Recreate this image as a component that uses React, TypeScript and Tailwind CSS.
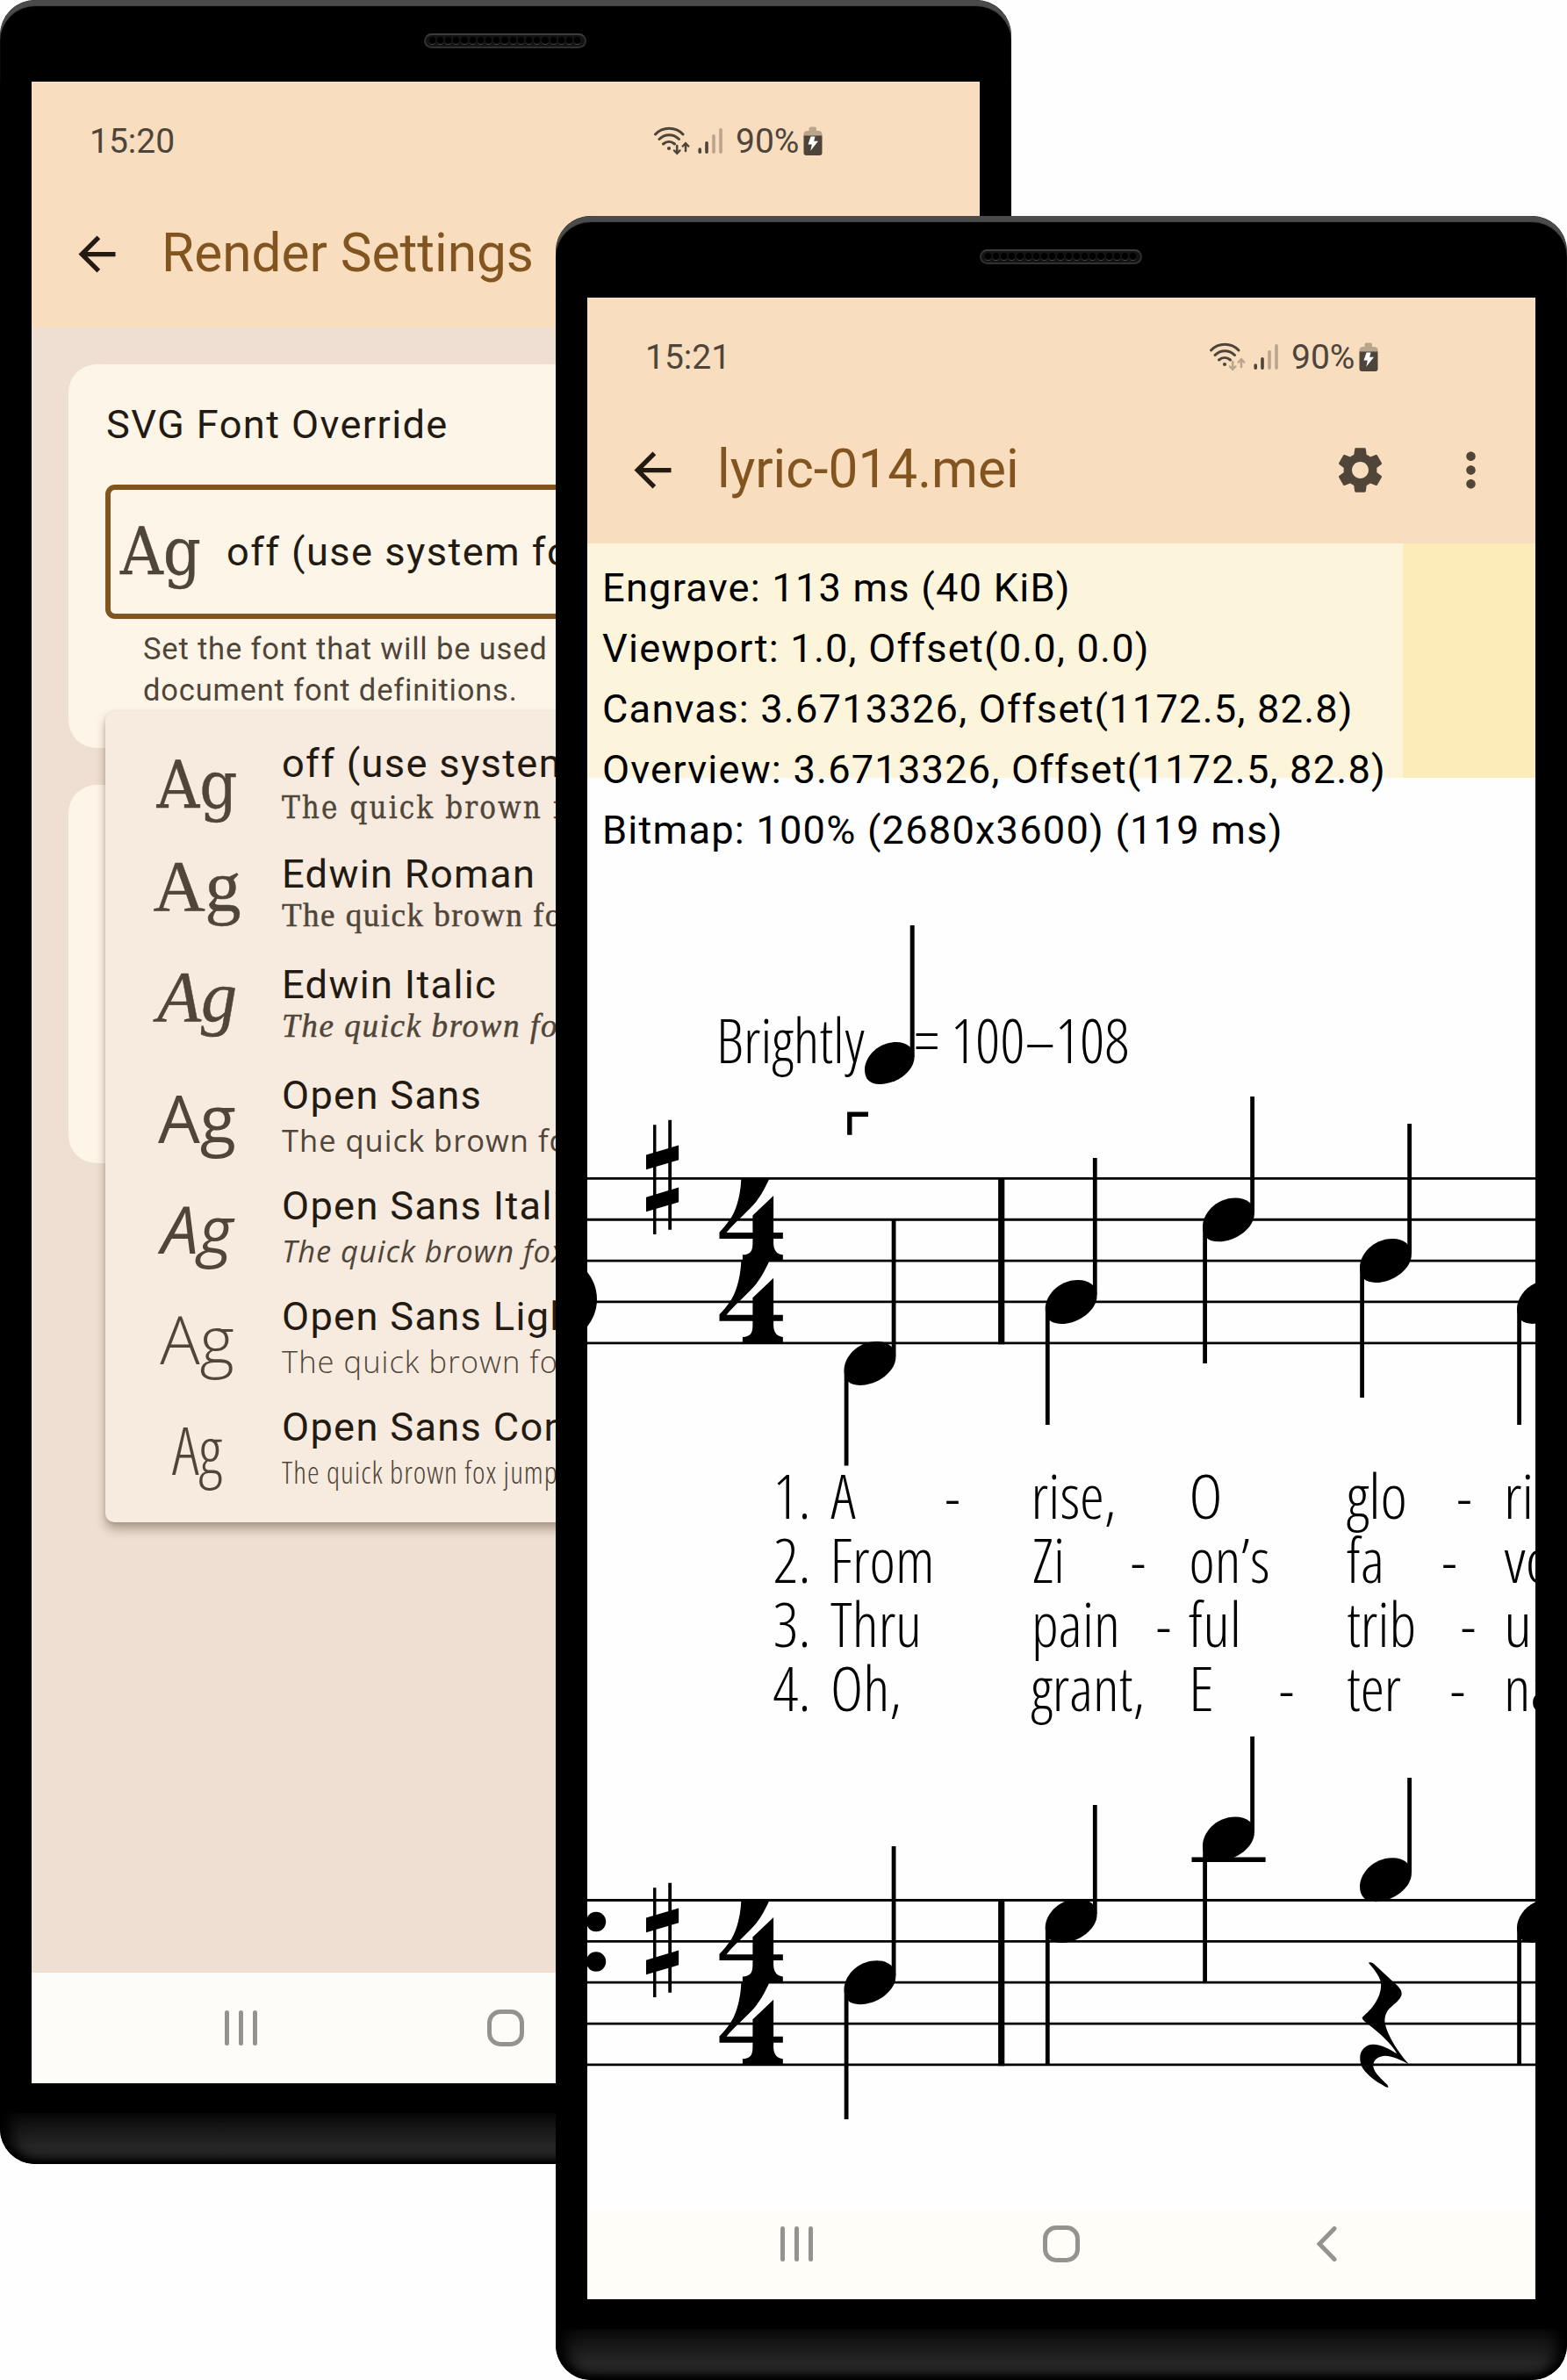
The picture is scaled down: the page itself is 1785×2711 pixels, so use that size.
import type { ReactNode } from "react";
import { MdArrowBack, MdMoreVert, MdSettings } from "react-icons/md";

const SERIF = "font-['DejaVu_Serif_Condensed','DejaVu_Serif',serif] [font-stretch:75%] [-webkit-text-stroke:0.4px_#4f4539]";
const EDWIN = "font-['Liberation_Serif',serif] [-webkit-text-stroke:0.5px_#4f4539]";
const OPEN = "font-['Open_Sans',sans-serif]";

function Speaker() {
  return (
    <div className="mr-[2px] flex h-[17px] w-[185px] items-center justify-center gap-[2px] rounded-full border-2 border-[#303030] border-t-[#3c3c3c] bg-[#131313]">
      {Array.from({ length: 19 }, (_, i) => (
        <span key={i} className="h-[9px] w-[7.2px] shrink-0 rounded-full border-b-[1.5px] border-[#4a4a4a] bg-black" />
      ))}
    </div>
  );
}

function StatusIcons({ arrows }: { arrows: string }) {
  return (
    <svg width="84" height="36" viewBox="743 143 84 36" fill="none" stroke="#4d443a" strokeLinecap="round" className="shrink-0">
      <g strokeWidth="3">
        <path d="M746.5 153C755 144 769.500 144 778 153" />
        <path d="M751 158.500C757.500 152 767 152 773.500 158.500" />
        <path d="M755.500 164C759.500 160.500 764.500 160.500 768.500 164" />
      </g>
      <circle cx="762" cy="169" r="2.100" fill="#4d443a" stroke="none" />
      <g stroke={arrows} strokeWidth="2.500">
        <path d="M771.200 166V174.500M768 171.500L771.200 174.800L774.400 171.500" />
        <path d="M781 172V163.500M777.800 166.500L781 163.200L784.200 166.500" />
      </g>
      <g strokeWidth="3.600">
        <path d="M797.200 170V173.300M805 162.800V173.300" />
        <path d="M813 154.800V173.300M821 147.800V173.300" stroke="#baa58d" />
      </g>
    </svg>
  );
}

function Battery() {
  return (
    <svg width="22" height="34" viewBox="0 0 22 34" className="ml-[5px] shrink-0">
      <path d="M6.500 5V2.500Q6.500 .5 8.500 .5H13Q15 .5 15 2.500V5H18Q21.500 5.500 21.500 9V11H.5V9Q.5 5.500 4 5Z" fill="#baa58d" />
      <path d="M.5 10.500H21.500V30Q21.500 33 18.500 33H3.500Q.5 33 .5 30Z" fill="#4d443a" />
      <path d="M8.500 11.500H13.500L12.200 16.800H17L8.300 27.800L9.800 20.500H5.500Z" fill="#fff" />
    </svg>
  );
}

function Header({ time, title, arrows, children }: { time: string; title: string; arrows: string; children?: ReactNode }) {
  return (
    <header className="h-[280px] bg-[#f8ddbf]">
      <div className="flex h-[135px] items-center pl-[66px] text-[39px] text-[#4d443a]">
        <span className="w-[641px] pt-[2px]">{time}</span>
        <StatusIcons arrows={arrows} />
        <span className="ml-[11px] pt-[2px]">90%</span>
        <Battery />
      </div>
      <div className="flex h-[123px] items-center pl-[43px]">
        <MdArrowBack size={63} color="#231a12" className="shrink-0" />
        <h1 className="ml-[42px] text-[60.3px] leading-none text-[#82541f]">{title}</h1>
        {children}
      </div>
    </header>
  );
}

function NavBar({ className }: { className: string }) {
  return (
    <nav className={`flex shrink-0 justify-center ${className}`}>
      <div className="flex w-[302px] items-center justify-center gap-[11px]">
        <i className="h-[40px] w-[5px] rounded-full bg-[#949390]" />
        <i className="h-[40px] w-[5px] rounded-full bg-[#949390]" />
        <i className="h-[40px] w-[5px] rounded-full bg-[#949390]" />
      </div>
      <div className="flex w-[302px] items-center justify-center">
        <i className="size-[42px] rounded-[15px] border-[5.5px] border-[#949390]" />
      </div>
      <div className="flex w-[302px] items-center justify-center">
        <svg width="24" height="42" viewBox="0 0 24 42" fill="none" stroke="#949390" strokeWidth="5" strokeLinecap="round">
          <path d="M21 3.500L4 21L21 38.500" />
        </svg>
      </div>
    </nav>
  );
}

function Phone({ className, children }: { className?: string; children: ReactNode }) {
  return (
    <div className={`isolate col-start-1 row-start-1 flex h-[2465px] w-[1152px] flex-col overflow-hidden rounded-[40px] bg-black ${className ?? ""}`}>
      <div className="flex h-[93px] shrink-0 justify-center rounded-t-[40px] pt-[38px] shadow-[inset_0_7px_1px_#4b4b4b]">
        <Speaker />
      </div>
      <div className="relative mx-[36px] flex h-[2280px] shrink-0 flex-col overflow-hidden">{children}</div>
      <div className="mt-[34px] h-[58px] rounded-b-[40px] bg-linear-to-b from-[#0a0a0a] via-[#262626] via-65% to-[#1c1c1c] shadow-[inset_20px_0_16px_-8px_#000,inset_-20px_0_16px_-8px_#000,inset_0_-6px_6px_-1px_#000]" />
    </div>
  );
}

const fonts = [
  { name: "off (use system font)", ag: `${SERIF} text-[75px] leading-[126px]`, sub: `${SERIF} text-[34.500px] tracking-[2.150px]` },
  { name: "Edwin Roman", ag: `${EDWIN} text-[82px] leading-[106px]`, sub: `${EDWIN} -mt-1 text-[37px] tracking-[1.500px]` },
  { name: "Edwin Italic", ag: `${EDWIN} text-[82px] leading-[106px] italic`, sub: `${EDWIN} -mt-1 text-[37px] italic tracking-[1.650px]` },
  { name: "Open Sans", ag: `${OPEN} text-[75.600px] leading-[127px]`, sub: `${OPEN} text-[34.500px] tracking-[1.000px]` },
  { name: "Open Sans Italic", ag: `${OPEN} text-[75.600px] leading-[127px] italic`, sub: `${OPEN} text-[34.500px] italic tracking-[0.950px]` },
  { name: "Open Sans Light", ag: `${OPEN} text-[75.600px] leading-[127px] font-light`, sub: `${OPEN} text-[34.500px] font-light tracking-[1.050px]` },
  { name: "Open Sans Condensed Light", ag: `${OPEN} text-[75.600px] leading-[127px] font-light [font-stretch:75%]`, sub: `${OPEN} text-[34.500px] font-light tracking-[1.000px] [font-stretch:75%]` },
];

function SettingsScreen() {
  return (
    <>
      <Header time="15:20" title="Render Settings" arrows="#4d443a" />
      <main className="relative flex flex-1 flex-col gap-[42px] bg-[#eedfd2] p-[42px]">
        <section className="h-[437px] rounded-[32px] bg-[#fef5e9] px-[42px] pt-[39px]">
          <h2 className="pl-px text-[45.200px] leading-[60px] tracking-[1.380px] text-[#231a12]">SVG Font Override</h2>
          <div className="mt-[38px] flex h-[153px] items-center rounded-[11px] border-[6px] border-[#82541f] pl-[11px]">
            <span className={`${SERIF} w-[121px] shrink-0 text-[75px] leading-none text-[#4f4539]`}>Ag</span>
            <span className="text-[45.200px] tracking-[1.430px] whitespace-nowrap text-[#231a12]">off (use system font)</span>
          </div>
          <p className="mt-[11px] pl-[43px] text-[34.500px] leading-[47px] tracking-[0.830px] whitespace-nowrap text-[#4f4539]">
            Set the font that will be used instead of
            <br />
            document font definitions.
          </p>
        </section>
        <section className="h-[431px] rounded-[32px] bg-[#fef5e9]" />
        <ul className="absolute top-[437px] left-[84px] h-[924px] w-[912px] overflow-visible rounded-[10px] bg-[#f7ebdf] py-[21px] shadow-[0_8px_12px_rgba(60,40,20,0.35),0_1px_4px_rgba(60,40,20,0.15)]">
          {fonts.map((f) => (
            <li key={f.name} className="flex h-[126px] overflow-hidden">
              <span className={`w-[201px] shrink-0 pl-[8px] text-center text-[#4f4539] ${f.ag}`}>Ag</span>
              <div className="pt-[12px] whitespace-nowrap">
                <div className="text-[45.200px] leading-[54px] tracking-[1.330px] text-[#231a12]">{f.name}</div>
                <div className={`leading-[47px]! text-[#4f4539] ${f.sub}`}>The quick brown fox jumps</div>
              </div>
            </li>
          ))}
        </ul>
      </main>
      <NavBar className="h-[126px] bg-[#fdfcf9]" />
    </>
  );
}

type Note = { x: number; y: number; up?: number; down?: number };

const notes: Note[] = [
  { x: 961.5, y: 1553, up: 1390, down: 1669.5 },
  { x: 1190.7, y: 1483, up: 1319, down: 1623 },
  { x: 1370, y: 1389.4, up: 1249, down: 1553 },
  { x: 1549, y: 1436, up: 1280, down: 1592 },
  { x: 1728, y: 1483, down: 1623 },
  { x: 961.5, y: 2258.3, up: 2103, down: 2414 },
  { x: 1190.7, y: 2188, up: 2056, down: 2352 },
  { x: 1370, y: 2094.5, up: 1978, down: 2258 },
  { x: 1549, y: 2141.2, up: 2025 },
  { x: 1728, y: 2188, down: 2352 },
];

const HEAD = "M0 -39c0 68 73 172 200 172c66 0 114 -37 114 -95c0 -84 -106 -171 -218 -171c-64 0 -96 30 -96 94z";
const FOUR =
  "M65 0C62 58 46 95 31 115C22 127 12 138 0 150V168H99V180C99 204 91 212 69 213V229H189V213C172 212 161 200 161 180V168H189V151H161V48L99 103V151H21C50 118 90 88 110 64C125 45 135 28 147 4V0Z";
const REST =
  "M982 576C988 573 995 576 1000 580L1060 625C1070 632 1080 640 1080 649C1080 660 1065 670 1050 680C1038 688 1030 698 1030 715C1034 742 1065 785 1102 817C1080 808 1055 797 1030 797C1008 798 996 808 996 822C999 838 1022 853 1038 866L1041 872C1037 873 1030 870 1025 867C1000 857 980 843 966 828C960 821 957 812 957 802C957 783 975 770 996 770C1020 770 1045 782 1066 792C1050 767 1010 740 979 721C974 717 966 714 963 707C972 697 985 692 998 676C1012 660 1019 645 1019 628C1019 612 1003 596 982 576Z";

function Sharp({ y }: { y: number }) {
  return (
    <g transform={`translate(736 ${y}) scale(.3827 .4082)`}>
      <path d="M21 -150H30V156H21ZM66 -163H76V143H66Z" />
      <path d="M0 -66L97 -93V-52L0 -25ZM0 52L97 25V66L0 93Z" />
    </g>
  );
}

// [x, advance, text] for every syllable, one array for each verse
const lyrics: [number, number, string][][] = [
  [[880.500, 43, "1."], [946.500, 28, "A"], [1076.500, 17, "-"], [1174.500, 97, "rise,"], [1354.500, 38, "O"], [1534, 69, "glo"], [1659.500, 17, "-"], [1713, 65, "rio"]],
  [[880.500, 43, "2."], [945.500, 119, "From"], [1176, 37, "Zi"], [1288, 17, "-"], [1354.500, 92, "on’s"], [1534, 43, "fa"], [1642.500, 17, "-"], [1713.500, 56, "vo"]],
  [[880.500, 43, "3."], [946, 104, "Thru"], [1175, 101, "pain"], [1317, 17, "-"], [1354, 60, "ful"], [1534, 79, "trib"], [1664, 17, "-"], [1713, 32, "u"]],
  [[880.500, 43, "4."], [946, 81, "Oh,"], [1174.500, 129.500, "grant,"], [1354, 29, "E"], [1457, 17, "-"], [1534, 62, "ter"], [1652, 17, "-"], [1713, 58, "na"]],
];

function Score() {
  return (
    <svg width="1080" height="1898" viewBox="669 619 1080 1898" className="block bg-[#fefefe]">
      <rect x="669" y="619" width="929" height="267" fill="#fdf4dc" />
      <rect x="1598" y="619" width="151" height="267" fill="#fcecb9" />
      {[1342.4, 2164.5].map((top) => (
        <g key={top}>
          {[0, 1, 2, 3, 4].map((n) => (
            <path key={n} d={`M669 ${top + n * 46.850}H1749`} stroke="#000" strokeWidth="2.800" />
          ))}
          <path d={`M1140.700 ${top - 1.400}V${top + 188.800}`} stroke="#000" strokeWidth="7.200" />
          <path d={FOUR} transform={`translate(819.500 ${top}) scale(.3827 .4082)`} />
          <path d={FOUR} transform={`translate(819.500 ${top + 93.700}) scale(.3827 .4082)`} />
        </g>
      ))}
      <Sharp y={1342.4} />
      <Sharp y={2211.4} />
      <circle cx="631" cy="1480" r="49" />
      <circle cx="679" cy="2189" r="11.200" />
      <circle cx="679" cy="2234.500" r="11.200" />
      {notes.map((n, i) => (
        <g key={i} stroke="#000" strokeWidth="4.800">
          <path d={HEAD} stroke="none" transform={`translate(${n.x} ${n.y}) scale(.1875 -.1875)`} />
          {n.up && <path d={`M${n.x + 56.600} ${n.y - 8}V${n.up}`} />}
          {n.down && <path d={`M${n.x + 2.600} ${n.y + 8}V${n.down}`} />}
        </g>
      ))}
      <path d="M1357.500 2118.300H1441.600" stroke="#000" strokeWidth="5.400" />
      <path d={REST} transform="translate(1180 1960) scale(.3858 .4789)" />
      <path d="M967.800 1292.700V1269.200H989" fill="none" stroke="#000" strokeWidth="5.400" />
      <path d={HEAD} transform="translate(985 1211) scale(.18 -.18)" />
      <path d="M1039.200 1204V1054" stroke="#000" strokeWidth="5" />
      <g className="font-['Open_Sans',sans-serif] text-[70px] font-light [font-stretch:75%]">
        <text x="816" y="1210.600" textLength="169" lengthAdjust="spacingAndGlyphs">Brightly</text>
        <text x="1041.500" y="1210.600" textLength="245" lengthAdjust="spacingAndGlyphs">= 100–108</text>
        {lyrics.map((verse, v) =>
          verse.map(([x, w, t]) => (
            <text key={`${v}-${x}`} x={x} y={1729.800 + v * 73} textLength={w} lengthAdjust="spacingAndGlyphs">
              {t}
            </text>
          )),
        )}
      </g>
    </svg>
  );
}

const stats = [
  "Engrave: 113 ms (40 KiB)",
  "Viewport: 1.0, Offset(0.0, 0.0)",
  "Canvas: 3.6713326, Offset(1172.5, 82.8)",
  "Overview: 3.6713326, Offset(1172.5, 82.8)",
  "Bitmap: 100% (2680x3600) (119 ms)",
];

function ScoreScreen() {
  return (
    <>
      <Header time="15:21" title="lyric-014.mei" arrows="#baa58d">
        <div className="mr-[42px] ml-auto flex gap-[63px]">
          <MdSettings size={63} color="#4f4539" />
          <MdMoreVert size={63} color="#4f4539" />
        </div>
      </Header>
      <main className="relative h-[1898px] shrink-0">
        <Score />
        <div className="absolute top-4 left-[17px] text-[45.200px] leading-[69px] tracking-[1.210px] whitespace-nowrap text-black">
          {stats.map((s) => (
            <p key={s}>{s}</p>
          ))}
        </div>
      </main>
      <NavBar className="h-[102px] bg-[#fefdf8] pb-[24px]" />
    </>
  );
}

export default function App() {
  return (
    <div className="grid h-[2711px] w-[1785px] grid-cols-1 items-start overflow-hidden bg-[#fefefe] font-['Roboto',sans-serif]">
      <Phone>
        <SettingsScreen />
      </Phone>
      <Phone className="z-10 mt-[246px] ml-[633px]">
        <ScoreScreen />
      </Phone>
    </div>
  );
}
